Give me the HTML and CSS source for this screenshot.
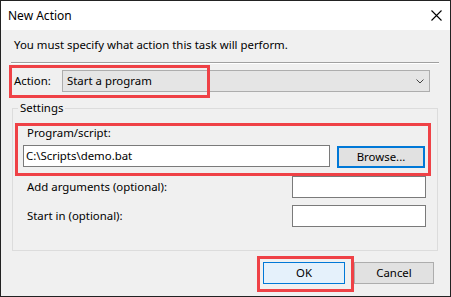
FILE: index.html
```html
<!DOCTYPE html>
<html>
<head>
<meta charset="utf-8">
<link rel="stylesheet" href="styles.css">
</head>
<body>
<div class="window">
  <div class="titlebar">
    <span class="title">New Action</span>
    <svg class="close" width="11" height="11" viewBox="0 0 11 11"><path d="M0.5 0.5L10.5 10.5M10.5 0.5L0.5 10.5" stroke="#000" stroke-width="1.1" fill="none"/></svg>
  </div>
  <div class="content">
    <p class="intro">You must specify what action this task will perform.</p>
    <div class="sep"></div>
    <div class="action-row">
      <span class="lbl">Action:</span>
      <div class="combo">
        <span>Start a program</span>
        <svg class="chev" width="8" height="5" viewBox="0 0 8 5"><path d="M0.5 0.5L4 4L7.5 0.5" stroke="#444" stroke-width="1" fill="none"/></svg>
      </div>
    </div>
    <fieldset class="settings">
      <legend>Settings</legend>
      <div class="lbl prog-lbl">Program/script:</div>
      <div class="prog-row">
        <div class="input wide">C:\Scripts\demo.bat</div>
        <div class="btn browse">Browse...</div>
      </div>
      <div class="opt-row first">
        <span class="lbl">Add arguments (optional):</span>
        <div class="input small"></div>
      </div>
      <div class="opt-row">
        <span class="lbl">Start in (optional):</span>
        <div class="input small"></div>
      </div>
    </fieldset>
    <div class="buttons">
      <div class="btn ok">OK</div>
      <div class="btn cancel">Cancel</div>
    </div>
  </div>
  <div class="hl hl-action"></div>
  <div class="hl hl-prog"></div>
  <div class="hl hl-ok"></div>
</div>
</body>
</html>
```
FILE: styles.css
```css
* { box-sizing: border-box; }
html, body { margin: 0; padding: 0; }
body {
  width: 451px;
  height: 297px;
  overflow: hidden;
  font-family: "Noto Sans", "Open Sans", sans-serif;
  font-size: 11.4px;
  color: #000;
  background: #fff;
}
.window {
  position: relative;
  width: 451px;
  height: 297px;
  border: 1px solid #222;
  display: flex;
  flex-direction: column;
  background: #f0f0f0;
}
.titlebar {
  height: 29px;
  background: #fff;
  display: flex;
  align-items: center;
  justify-content: space-between;
  padding: 0 8px 0 7px;
}
.title { line-height: 16px; font-size: 12px; }
.content {
  flex: 1;
  padding: 7px 11px 0 10px;
  display: flex;
  flex-direction: column;
}
.intro {
  margin: 0;
  padding-left: 3px;
  line-height: 16px;
}
.sep {
  margin-top: 9px;
  height: 2px;
  border-top: 1px solid #a0a0a0;
  border-bottom: 1px solid #fff;
}
.action-row {
  margin-top: 6px;
  display: flex;
  align-items: center;
  padding-left: 3px;
}
.action-row .lbl { width: 48px; }
.combo {
  width: 368px;
  height: 22px;
  background: #e5e5e5;
  border: 1px solid #adadad;
  display: flex;
  align-items: center;
  justify-content: space-between;
  padding: 0 5px 0 4px;
  line-height: 16px;
}
.settings {
  margin: 8px 1px 0 1px;
  padding: 9px 11px 23px 10px;
  border: 1px solid #dcdcdc;
  min-width: 0;
}
.settings legend {
  margin-left: -5px;
  padding: 0 2px;
  line-height: 16px;
}
.lbl { line-height: 16px; }
.prog-lbl { padding-left: 4px; }
.prog-row {
  margin-top: 4px;
  display: flex;
  align-items: flex-start;
  gap: 7px;
}
.input {
  height: 22px;
  background: #fff;
  border: 1px solid #7a7a7a;
  line-height: 20px;
  padding-left: 2px;
}
.wide { width: 307px; }
.small { width: 134px; }
.btn {
  height: 22px;
  background: #e1e1e1;
  border: 1px solid #adadad;
  display: flex;
  align-items: center;
  justify-content: center;
  line-height: 16px;
}
.browse {
  margin-top: 1px;
  width: 88px;
  border: 2px solid #0078d7;
}
.opt-row {
  margin-top: 7px;
  display: flex;
  align-items: center;
  justify-content: space-between;
  padding-left: 4px;
}
.opt-row.first { margin-top: 8px; }
.buttons {
  margin-top: 11px;
  display: flex;
  justify-content: flex-end;
  gap: 9px;
  padding-right: 5px;
}
.ok {
  width: 82px;
  background: #e5f1fb;
  border-color: #0078d7;
}
.cancel { width: 80px; }
.hl {
  position: absolute;
  border: 3px solid #ef4146;
}
.hl-action { left: 8px; top: 64px; width: 201px; height: 33px; }
.hl-prog { left: 14px; top: 122px; width: 416px; height: 53px; }
.hl-ok { left: 256px; top: 255px; width: 97px; height: 36px; }
```
